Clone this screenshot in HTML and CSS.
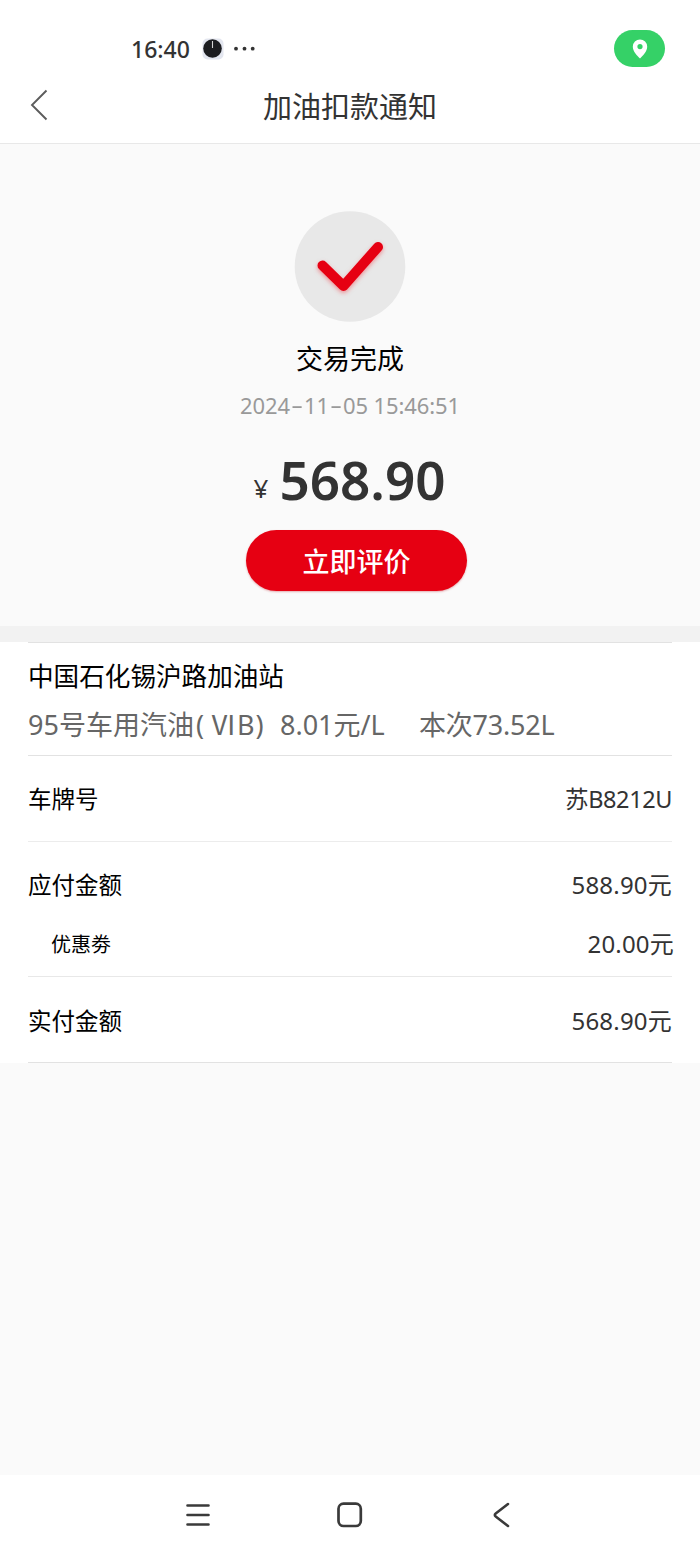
FILE: index.html
```
<!DOCTYPE html>
<html lang="zh-CN">
<head>
<meta charset="utf-8">
<title>加油扣款通知</title>
<link rel="stylesheet" href="styles.css">
</head>
<body>
<div class="screen">
  <div class="status">
    <span class="clock">16:40</span>
    <svg class="app" width="22" height="22" viewBox="0 0 22 22"><rect x=".5" y=".5" width="21" height="21" rx="5" fill="#e3e6ef"/><circle cx="10.5" cy="10.500" r="9.300" fill="#1c1d20"/><path d="M10.500 3v7" stroke="#d5d5d5" stroke-width="1.100"/></svg>
    <svg class="dots" width="22" height="6" viewBox="0 0 22 6" fill="#333"><circle cx="3" cy="2.700" r="1.900"/><circle cx="11.500" cy="2.700" r="1.900"/><circle cx="19.700" cy="2.700" r="1.900"/></svg>
    <span class="location"><svg width="16" height="20" viewBox="0 0 16 20"><path fill="#fff" fill-rule="evenodd" d="M8 .5A7.200 7.200 0 0 0 .8 7.700C.8 12.500 5.500 17 8 19.500c2.500-2.500 7.200-7 7.200-11.800A7.200 7.200 0 0 0 8 .5ZM8 5a2.600 2.600 0 1 1 0 5.200A2.600 2.600 0 0 1 8 5Z"/></svg></span>
  </div>
  <header class="header">
    <svg class="back" width="20" height="32" viewBox="0 0 20 32"><path d="M18.500 1.500 4 16l14.500 14.500" fill="none" stroke="#5c5c5c" stroke-width="1.900"/></svg>
    <h1 class="title">加油扣款通知</h1>
  </header>
  <section class="result">
    <svg class="check" width="112" height="112" viewBox="0 0 112 112"><circle cx="56" cy="55.500" r="55.300" fill="#e8e8e8"/><path class="tick" d="M28.500 54.500 49.500 75 84 36" fill="none" stroke="#e60012" stroke-width="10" stroke-linecap="round" stroke-linejoin="round"/></svg>
    <p class="state">交易完成</p>
    <p class="date">2024<span class="dash">-</span>11<span class="dash">-</span>05 15:46:51</p>
    <p class="amount"><span class="yen">¥</span><span class="sum">568.90</span></p>
    <button class="rate">立即评价</button>
  </section>
  <section class="details">
    <div class="station">
      <h2 class="name">中国石化锡沪路加油站</h2>
      <p class="fuel"><span class="grade">95号车用汽油<span class="open">(</span>ⅥB<span class="close">)</span></span><span class="price">8.01元/L</span><span class="volume">本次73.52L</span></p>
    </div>
    <div class="row plate"><span>车牌号</span><span class="value">苏B8212U</span></div>
    <div class="row payable"><span>应付金额</span><span class="value">588.90元</span></div>
    <div class="row coupon"><span class="label">优惠劵</span><span class="value">20.00元</span></div>
    <div class="row paid"><span>实付金额</span><span class="value">568.90元</span></div>
  </section>
  <nav class="nav">
    <svg width="26" height="26" viewBox="0 0 26 26"><path d="M2.500 3.500h21M2.500 13h21M2.500 22.500h21" fill="none" stroke="#3a3a3a" stroke-width="2.600" stroke-linecap="round"/></svg>
    <svg width="26" height="26" viewBox="0 0 26 26"><rect x="1.500" y="1.700" width="22.300" height="22.300" rx="5" fill="none" stroke="#3a3a3a" stroke-width="2.700"/></svg>
    <svg width="26" height="26" viewBox="0 0 26 26"><path d="M19 2 7 11.200q-2.400 1.800 0 3.600L19 24" fill="none" stroke="#3a3a3a" stroke-width="2.600" stroke-linecap="round"/></svg>
  </nav>
</div>
</body>
</html>
```
FILE: styles.css
```
* { box-sizing: border-box; }
body { margin: 0; background: #fafafa; font-family: "Noto Sans", "Noto Sans CJK SC", sans-serif; color: #000; }
h1, h2, p { margin: 0; font-weight: 400; white-space: nowrap; }
svg { display: block; flex: none; }
.screen { width: 700px; height: 1555px; display: flex; flex-direction: column; }
.status { height: 78px; padding: 19px 35px 0 131px; display: flex; align-items: center; background: #fff; }
.clock { width: 71px; font-size: 23px; font-weight: 500; line-height: 30px; color: #333; white-space: nowrap; }
.dots { margin-left: 9px; }
.location { margin-left: auto; width: 51px; height: 37px; border-radius: 19px; background: #35d167; display: flex; align-items: center; justify-content: center; }
.header { height: 66px; padding: 0 28px; display: grid; grid-template-columns: 60px 1fr 60px; align-items: center; background: #fff; border-bottom: 1px solid #e8e8e8; }
.back { margin-top: -12px; }
.title { text-align: center; font-size: 29px; line-height: 40px; margin-top: -8px; color: #333; }
.result { height: 482px; padding-top: 67px; display: flex; flex-direction: column; align-items: center; }
.tick { filter: drop-shadow(0 2px 2px rgba(240, 60, 70, .5)); }
.state { margin-top: 16px; font-size: 27px; line-height: 40px; }
.date { margin-top: 11px; font-size: 22px; line-height: 30px; letter-spacing: -.1px; color: #999; }
.dash { display: inline-block; font-family: Inter, sans-serif; line-height: 1; transform: scaleX(1.3); margin: 0 2px; }
.amount { margin-top: 27px; height: 66px; display: flex; align-items: baseline; color: #333; }
.yen { position: relative; top: -2px; width: 26px; font-size: 26px; }
.sum { margin-right: 1px; font-size: 53px; line-height: 66px; font-weight: 560; }
.rate { width: 221px; height: 61px; margin: 17px 0 0 13px; padding: 2px 0 0; border: 0; border-radius: 31px; background: #e60012; color: #fff; font: 500 27px/40px "Noto Sans", "Noto Sans CJK SC", sans-serif; box-shadow: 0 1px 2px rgba(190, 30, 40, .35); }
.details { height: 437px; padding: 0 28px; border-top: 16px solid #f2f2f2; background: #fff; }
.station { height: 114px; border-top: 1px solid #e2e2e2; border-bottom: 1px solid #e2e2e2; padding-top: 16px; }
.name { font-size: 25.600px; line-height: 36px; }
.fuel { display: flex; margin-top: 11px; font-size: 27px; line-height: 38px; color: #666; }
.grade { width: 252px; }
.open { margin: 0 6px 0 2px; }
.close { margin-left: 1px; }
.price { width: 139px; }
.volume { letter-spacing: -.2px; }
.row { display: flex; justify-content: space-between; align-items: center; font-size: 23.500px; line-height: 34px; white-space: nowrap; }
.value { font-size: 24px; letter-spacing: .2px; color: #333; }
.plate { height: 86px; padding-top: 1px; border-bottom: 1px solid #ececec; }
.plate .value { font-size: 23.500px; letter-spacing: -.4px; }
.payable { height: 87px; padding-bottom: 1px; }
.coupon { height: 48px; padding: 0 0 17px 23px; border-bottom: 1px solid #e8e8e8; }
.coupon .label { padding-top: 2px; font-size: 20px; }
.coupon .value { margin-right: -2px; }
.paid { height: 86px; padding-top: 2px; border-bottom: 1px solid #e2e2e2; }
.nav { height: 80px; margin-top: auto; padding: 0 185px; display: flex; align-items: center; justify-content: space-between; background: #fff; }
```
